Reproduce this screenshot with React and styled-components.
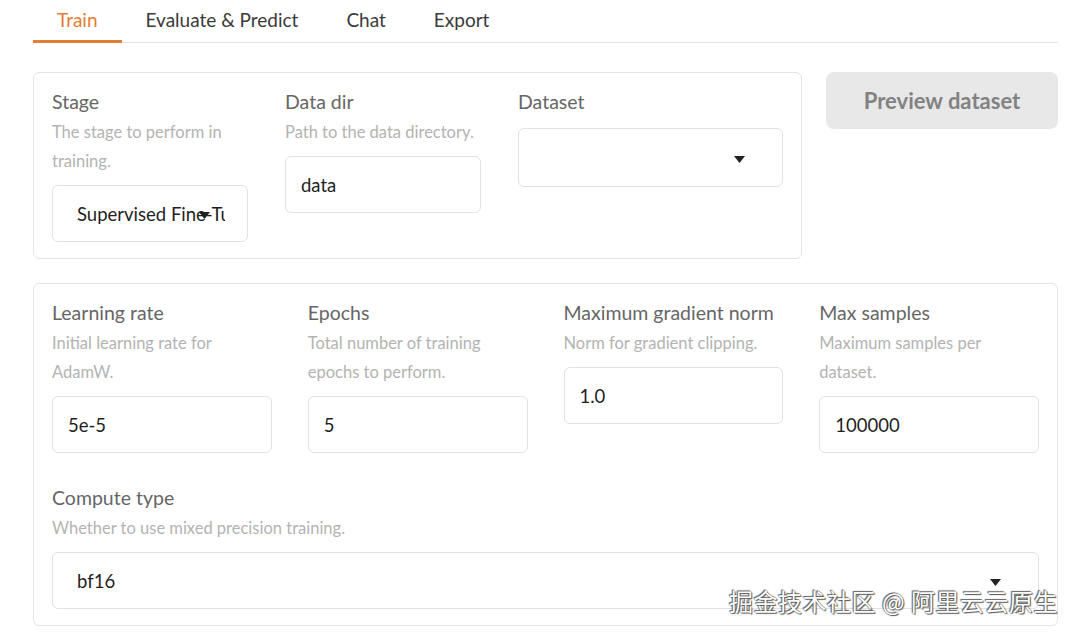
import React from 'react'
import styled, { createGlobalStyle } from 'styled-components'

const GlobalStyle = createGlobalStyle`
  html, body {
    margin: 0;
    padding: 0;
    background: #ffffff;
    font-family: Lato, "Noto Sans", sans-serif;
  }
  * { box-sizing: border-box; }
`

const tabs = ['Train', 'Evaluate & Predict', 'Chat', 'Export']

const topFields = [
  { label: 'Stage', desc: 'The stage to perform in training.', value: 'Supervised Fine-Tuning', select: true },
  { label: 'Data dir', desc: 'Path to the data directory.', value: 'data' },
  { label: 'Dataset', value: '', select: true, tall: true },
]

const trainFields = [
  { label: 'Learning rate', desc: 'Initial learning rate for AdamW.', value: '5e-5' },
  { label: 'Epochs', desc: 'Total number of training epochs to perform.', value: '5' },
  { label: 'Maximum gradient norm', desc: 'Norm for gradient clipping.', value: '1.0' },
  { label: 'Max samples', desc: 'Maximum samples per dataset.', value: '100000' },
]

function Caret() {
  return (
    <CaretIcon width="11" height="7" viewBox="0 0 11 7">
      <path d="M0 0 H11 L5.5 7 Z" fill="#222" />
    </CaretIcon>
  )
}

function Field({ label, desc, value, select, tall }) {
  return (
    <FieldBox>
      <Label>{label}</Label>
      {desc && <Desc>{desc}</Desc>}
      <InputBox $select={select} $tall={tall}>
        <Value>{value}</Value>
        {select && <Caret />}
      </InputBox>
    </FieldBox>
  )
}

export default function App() {
  return (
    <Page>
      <GlobalStyle />
      <TabBar>
        {tabs.map((t, i) => (
          <Tab key={t} $active={i === 0}>{t}</Tab>
        ))}
      </TabBar>

      <TopRow>
        <Panel $grow>
          <TopGrid>
            {topFields.map((f) => <Field key={f.label} {...f} />)}
          </TopGrid>
        </Panel>
        <PreviewButton>Preview dataset</PreviewButton>
      </TopRow>

      <Panel>
        <FourGrid>
          {trainFields.map((f) => <Field key={f.label} {...f} />)}
        </FourGrid>
        <Spacer />
        <Field label="Compute type" desc="Whether to use mixed precision training." value="bf16" select />
      </Panel>

      <Watermark>掘金技术社区 @ 阿里云云原生</Watermark>
    </Page>
  )
}

const Page = styled.div`
  position: relative;
  width: 1080px;
  height: 636px;
  overflow: hidden;
  padding: 0 22px 0 33px;
  display: flex;
  flex-direction: column;
`

const TabBar = styled.div`
  display: flex;
  height: 43px;
  border-bottom: 1px solid #e3e3e3;
  margin-bottom: 29px;
`

const Tab = styled.div`
  padding: 0 24px;
  height: 43px;
  line-height: 40px;
  font-size: 19px;
  color: ${({ $active }) => ($active ? '#e47d36' : '#3a3a3a')};
  border-bottom: 3px solid ${({ $active }) => ($active ? '#e47d36' : 'transparent')};
  margin-bottom: -1px;
`

const TopRow = styled.div`
  display: flex;
  gap: 24px;
  align-items: flex-start;
  margin-bottom: 24px;
`

const Panel = styled.div`
  flex: ${({ $grow }) => ($grow ? 1 : 'none')};
  border: 1px solid #e4e4e4;
  border-radius: 6px;
  background: #fff;
  padding: 16px 18px;
`

const PreviewButton = styled.div`
  width: 232px;
  height: 57px;
  border-radius: 8px;
  background: #e8e8e9;
  color: #828282;
  font-size: 22px;
  font-weight: 700;
  display: flex;
  align-items: center;
  justify-content: center;
`

const TopGrid = styled.div`
  display: grid;
  grid-template-columns: 196px 196px 1fr;
  column-gap: 37px;
  align-items: start;
`

const FourGrid = styled.div`
  display: grid;
  grid-template-columns: repeat(4, 1fr);
  column-gap: 36px;
  align-items: start;
`

const Spacer = styled.div`
  height: 32px;
`

const FieldBox = styled.div`
  display: flex;
  flex-direction: column;
  min-width: 0;
`

const Label = styled.div`
  font-size: 19.5px;
  line-height: 26px;
  color: #666;
  margin-bottom: 3px;
`

const Desc = styled.div`
  font-size: 16.5px;
  line-height: 29px;
  color: #b3b3b3;
`

const InputBox = styled.div`
  position: relative;
  margin-top: ${({ $tall }) => ($tall ? '10px' : '9px')};
  height: ${({ $tall }) => ($tall ? '59px' : '57px')};
  border: 1px solid #e2e2e2;
  border-radius: 6px;
  background: #fff;
  display: flex;
  align-items: center;
  padding: 0 ${({ $select }) => ($select ? '22px 0 24px' : '15px')};
  overflow: hidden;
`

const Value = styled.span`
  font-size: 18.5px;
  color: #1f1f1f;
  white-space: nowrap;
  overflow: hidden;
  flex: 1;
`

const CaretIcon = styled.svg`
  position: absolute;
  right: 37px;
  top: calc(50% - 2px);
`

const Watermark = styled.div`
  position: absolute;
  right: 22px;
  bottom: 18px;
  font-family: "Noto Sans CJK SC", sans-serif;
  font-size: 24px;
  color: #fff;
  letter-spacing: 0.5px;
  text-shadow: 0 0 1px #444, 1px 1px 1px #555, -1px -1px 1px #666;
`
